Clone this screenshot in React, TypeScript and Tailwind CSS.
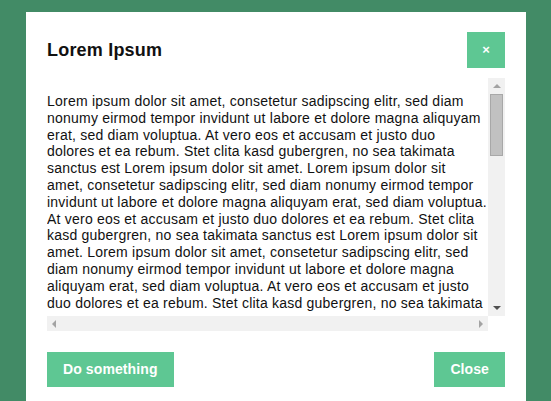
import React from "react";

const lines = [
  "Lorem ipsum dolor sit amet, consetetur sadipscing elitr, sed diam",
  "nonumy eirmod tempor invidunt ut labore et dolore magna aliquyam",
  "erat, sed diam voluptua. At vero eos et accusam et justo duo",
  "dolores et ea rebum. Stet clita kasd gubergren, no sea takimata",
  "sanctus est Lorem ipsum dolor sit amet. Lorem ipsum dolor sit",
  "amet, consetetur sadipscing elitr, sed diam nonumy eirmod tempor",
  "invidunt ut labore et dolore magna aliquyam erat, sed diam voluptua.",
  "At vero eos et accusam et justo duo dolores et ea rebum. Stet clita",
  "kasd gubergren, no sea takimata sanctus est Lorem ipsum dolor sit",
  "amet. Lorem ipsum dolor sit amet, consetetur sadipscing elitr, sed",
  "diam nonumy eirmod tempor invidunt ut labore et dolore magna",
  "aliquyam erat, sed diam voluptua. At vero eos et accusam et justo",
  "duo dolores et ea rebum. Stet clita kasd gubergren, no sea takimata",
];

export default function App() {
  return (
    <div
      className="w-[551px] h-[401px] overflow-hidden bg-[#428b66] pt-[12px] pl-[26px] pr-[25px]"
      style={{ fontFamily: '"Liberation Sans", Arial, sans-serif' }}
    >
      <div className="bg-white h-[420px] px-[21px] pt-[20px]">
        <div className="flex items-center justify-between h-[36px]">
          <h1 className="text-[18px] font-bold text-[#111] leading-none tracking-[0.2px]">Lorem Ipsum</h1>
          <button className="w-[38px] h-[36px] bg-[#5ec793] text-white text-[13px] font-bold flex items-center justify-center">
            ×
          </button>
        </div>
        <div className="mt-[10px] grid grid-cols-[441px_17px] grid-rows-[238px_15px]">
          <div className="overflow-hidden bg-white pt-[15px]">
            <div className="text-[14px] leading-[16.8px] text-[#111] tracking-[0.22px]">
              {lines.map((l, i) => (
                <div key={i} className="whitespace-nowrap">
                  {l}
                </div>
              ))}
            </div>
          </div>
          <div className="bg-[#f1f1f1] flex flex-col items-center">
            <div className="h-[16px] flex items-center justify-center">
              <div className="w-0 h-0 border-l-[4px] border-r-[4px] border-b-[4px] border-l-transparent border-r-transparent border-b-[#a3a3a3]" />
            </div>
            <div className="w-[13px] h-[62px] bg-[#c1c1c1] border border-[#a8a8a8]" />
            <div className="flex-1" />
            <div className="h-[16px] flex items-center justify-center">
              <div className="w-0 h-0 border-l-[4px] border-r-[4px] border-t-[4px] border-l-transparent border-r-transparent border-t-[#505050]" />
            </div>
          </div>
          <div className="bg-[#f1f1f1] flex items-center justify-between px-[5px]">
            <div className="w-0 h-0 border-t-[4px] border-b-[4px] border-r-[4px] border-t-transparent border-b-transparent border-r-[#a3a3a3]" />
            <div className="w-0 h-0 border-t-[4px] border-b-[4px] border-l-[4px] border-t-transparent border-b-transparent border-l-[#a3a3a3]" />
          </div>
          <div className="bg-white" />
        </div>
        <div className="flex justify-between mt-[21px]">
          <button className="h-[35px] px-[16px] bg-[#5ec793] text-white text-[14px] font-bold tracking-[0.1px]">
            Do something
          </button>
          <button className="h-[35px] px-[16px] bg-[#5ec793] text-white text-[14px] font-bold tracking-[0.1px]">
            Close
          </button>
        </div>
      </div>
    </div>
  );
}
